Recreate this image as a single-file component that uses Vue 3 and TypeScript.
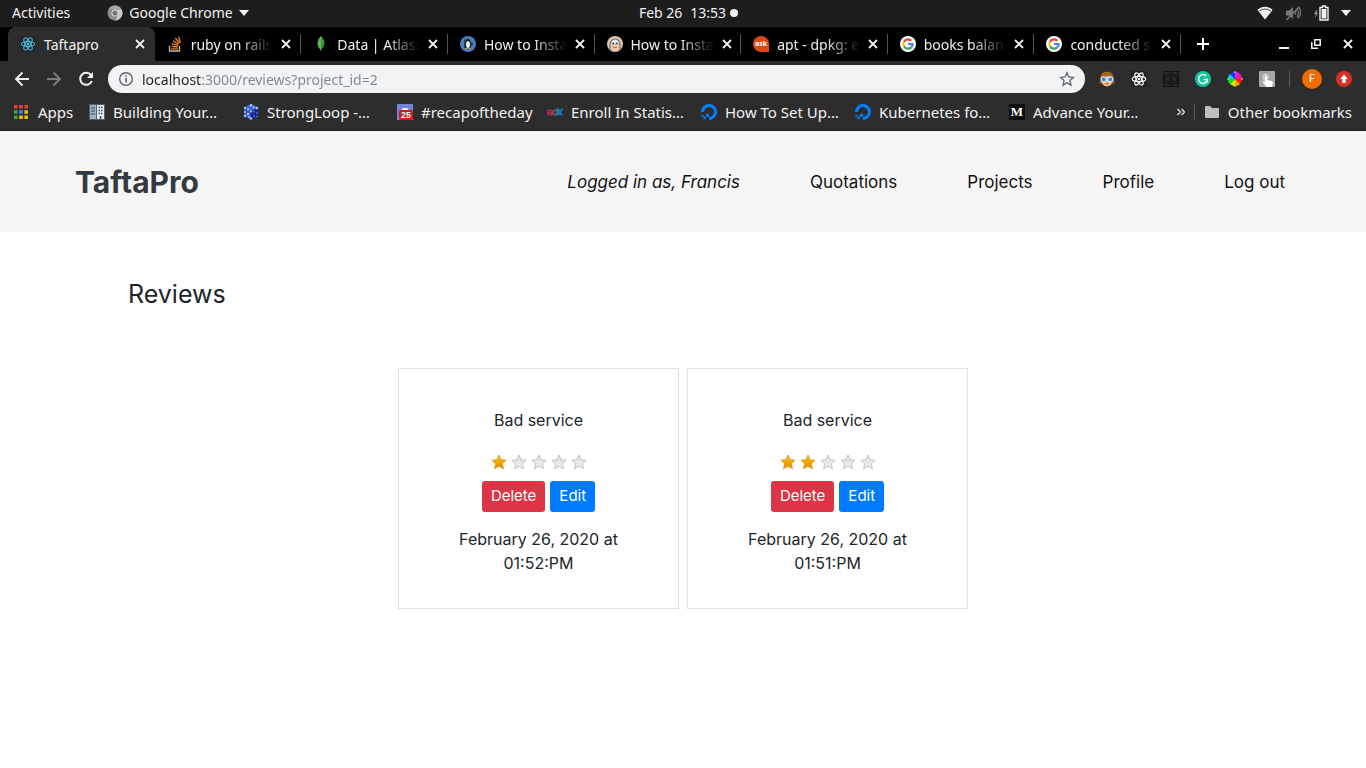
<script setup lang="ts">
import { ref } from 'vue'

interface Tab {
  title: string
  icon: string
}
interface Bookmark {
  title: string
  icon: string
  short?: boolean
}
interface Review {
  id: number
  body: string
  rating: number
  date: string
}

const address = ref('localhost:3000/reviews?project_id=2')

const tabs: Tab[] = [
  { title: 'Taftapro', icon: 'react' },
  { title: 'ruby on rails', icon: 'stack' },
  { title: 'Data | Atlas:', icon: 'leaf' },
  { title: 'How to Insta', icon: 'penguin' },
  { title: 'How to Insta', icon: 'face' },
  { title: 'apt - dpkg: e', icon: 'ask' },
  { title: 'books balan', icon: 'google' },
  { title: 'conducted s', icon: 'google' },
]

const extensions = ['girl', 'atom', 'owl', 'grammarly', 'wheel', 'touch']

const bookmarks: Bookmark[] = [
  { title: 'Building Your…', icon: 'building' },
  { title: 'StrongLoop -…', icon: 'cube' },
  { title: '#recapoftheday', icon: 'calendar', short: true },
  { title: 'Enroll In Statis…', icon: 'edx' },
  { title: 'How To Set Up…', icon: 'ocean' },
  { title: 'Kubernetes fo…', icon: 'ocean' },
  { title: 'Advance Your…', icon: 'medium' },
]

const links = ['Quotations', 'Projects', 'Profile', 'Log out']

const reviews: Review[] = [
  { id: 1, body: 'Bad service', rating: 1, date: 'February 26, 2020 at 01:52:PM' },
  { id: 2, body: 'Bad service', rating: 2, date: 'February 26, 2020 at 01:51:PM' },
]
</script>

<template>
  <div class="screen">
    <svg class="sprite" aria-hidden="true">
      <defs>
        <linearGradient id="gold" x1="0" y1="0" x2="0" y2="1">
          <stop offset="0" stop-color="#fdc513" />
          <stop offset="1" stop-color="#e68a00" />
        </linearGradient>
        <linearGradient id="silver" x1="0" y1="0" x2="0" y2="1">
          <stop offset="0" stop-color="#dcdcdc" />
          <stop offset="1" stop-color="#f1f1ee" />
        </linearGradient>
      </defs>
      <symbol id="react" viewBox="0 0 16 16">
        <rect width="16" height="16" rx="1" fill="#20262b" />
        <g fill="none" stroke="#53c1de" stroke-width="1">
          <ellipse cx="8" cy="8" rx="6.8" ry="2.6" />
          <ellipse cx="8" cy="8" rx="6.8" ry="2.6" transform="rotate(60 8 8)" />
          <ellipse cx="8" cy="8" rx="6.8" ry="2.6" transform="rotate(120 8 8)" />
        </g>
        <circle cx="8" cy="8" r="1.4" fill="#53c1de" />
      </symbol>
      <symbol id="stack" viewBox="0 0 16 16">
        <path d="M2.5 10v5h10v-5" fill="none" stroke="#bcbbbb" stroke-width="1.3" />
        <path d="M4.2 12.8h6.6M4.3 10.3l6.5.7M4.8 7.6l6.3 1.8M6 4.7l5.6 3.4M8.3 2l4.2 5M11.6.6l1.7 6" fill="none" stroke="#f48024" stroke-width="1.3" />
      </symbol>
      <symbol id="leaf" viewBox="0 0 16 16">
        <path d="M8 0C11.8 3.6 13.2 9 8.3 13.5L8 16l-.4-2.5C3 9.4 4.2 3.6 8 0Z" fill="#3f9c35" />
        <path d="M8 2v14l-.4-2.5C3 9.4 4.5 4 8 0Z" fill="#5ab552" />
      </symbol>
      <symbol id="penguin" viewBox="0 0 16 16">
        <circle cx="8" cy="8" r="8" fill="#4a7ebb" />
        <path d="M8 2.5 13.5 8 8 13.5 4 12V4Z" fill="#24405f" />
        <path d="M6 5c0-2.5 4-2.5 4 0l1 5c0 4-6 4-6 0Z" fill="#151a20" />
        <ellipse cx="8" cy="8.5" rx="2" ry="3.5" fill="#f4f1e6" />
        <path d="m7 5.3 1 1 1-1Z" fill="#f0a01f" />
        <path d="M5.5 12.5h2M8.5 12.5h2" stroke="#f0c040" />
      </symbol>
      <symbol id="face" viewBox="0 0 16 16">
        <circle cx="8" cy="8" r="8" fill="#e7c3a5" />
        <path d="M3 9a5 6 0 0 1 10 0v3a5 4 0 0 1-10 0Z" fill="#f3c6a5" stroke="#5f7893" stroke-width="1.2" />
        <path d="M4.5 6c2-3 5-3 7 0l-1 1h-5Z" fill="#e9edf1" />
        <circle cx="6.2" cy="7.5" r="1" fill="#36475a" />
        <circle cx="9.8" cy="7.5" r="1" fill="#36475a" />
        <path d="M6 11q2 1.5 4 0" stroke="#b56d52" fill="none" />
      </symbol>
      <symbol id="google" viewBox="0 0 16 16">
        <circle cx="8" cy="8" r="8" fill="#fff" />
        <g fill="none" stroke-width="2.2">
          <path d="M4 5.7A4.6 4.6 0 0 1 11.3 4.7" stroke="#ea4335" />
          <path d="M4 5.7a4.7 4.7 0 0 0 0 4.6" stroke="#fbbc05" />
          <path d="M4 10.3a4.6 4.6 0 0 0 7.2 1.1" stroke="#34a853" />
          <path d="M8 8h4.6a4.6 4.6 0 0 1-1.4 3.4" stroke="#4285f4" />
        </g>
      </symbol>
      <symbol id="girl" viewBox="0 0 16 16">
        <path d="M1.5 6C1.5-1 14.5-1 14.5 6l1 6.500h-15Z" fill="#a5641a" />
        <path d="M3 6.500c3 0 5-1 6-2 1 1 2 2 4 2v4c0 6.500-10 6.500-10 0Z" fill="#f1b98c" />
        <circle cx="4.7" cy="8.3" r="2.5" fill="#2f86d8" stroke="#cfe8ff" stroke-width="1.2" />
        <circle cx="11.3" cy="8.3" r="2.5" fill="#2f86d8" stroke="#cfe8ff" stroke-width="1.2" />
        <path d="M6.5 12.8h3" stroke="#c04e37" />
      </symbol>
      <symbol id="atom" viewBox="0 0 16 16">
        <rect width="16" height="16" rx="1" fill="#222" />
        <g fill="none" stroke="#f2f2f2" stroke-width="1.2">
          <ellipse cx="8" cy="8" rx="6.8" ry="2.6" />
          <ellipse cx="8" cy="8" rx="6.8" ry="2.6" transform="rotate(60 8 8)" />
          <ellipse cx="8" cy="8" rx="6.8" ry="2.6" transform="rotate(120 8 8)" />
        </g>
        <circle cx="8" cy="8" r="1.3" fill="#f2f2f2" />
      </symbol>
      <symbol id="owl" viewBox="0 0 16 16">
        <rect x=".5" y=".5" width="15" height="15" fill="#292929" stroke="#111" />
        <path d="M.5 4h15M.5 12.5h15M6 .5l2 4 2-4M6 15.5l2-4 2 4" fill="none" stroke="#151515" />
        <circle cx="4.7" cy="8" r="3" fill="none" stroke="#151515" stroke-width="1.2" />
        <circle cx="11.3" cy="8" r="3" fill="none" stroke="#151515" stroke-width="1.2" />
      </symbol>
      <symbol id="grammarly" viewBox="0 0 16 16">
        <circle cx="8" cy="8" r="8" fill="#15c39a" />
        <path d="M11 4.8A4.4 4.4 0 1 0 12.3 8.8" fill="none" stroke="#fff" stroke-width="1.5" />
        <path d="M8.8 8.6h3.5v3" fill="none" stroke="#fff" stroke-width="1.5" />
      </symbol>
      <symbol id="wheel" viewBox="0 0 16 16">
        <path d="M8 8V.8A7.2 7.2 0 0 1 13.1 2.9Z" fill="#e81cf0" />
        <path d="M8 8l5.1-5.1A7.2 7.2 0 0 1 15.2 8Z" fill="#ff1493" />
        <path d="M8 8h7.2a7.2 7.2 0 0 1-2.1 5.1Z" fill="#f01818" />
        <path d="M8 8l5.1 5.1A7.2 7.2 0 0 1 8 15.2Z" fill="#ffa000" />
        <path d="M8 8v7.2a7.2 7.2 0 0 1-5.1-2.1Z" fill="#c8f000" />
        <path d="M8 8l-5.1 5.1A7.2 7.2 0 0 1 .8 8Z" fill="#18e018" />
        <path d="M8 8H.8a7.2 7.2 0 0 1 2.1-5.1Z" fill="#00d8e8" />
        <path d="M8 8 2.9 2.9A7.2 7.2 0 0 1 8 .8Z" fill="#2038f0" />
        <path d="M8 0v2M8 14v2M0 8h2M14 8h2" stroke="#ddd" />
      </symbol>
      <symbol id="touch" viewBox="0 0 16 16">
        <rect width="16" height="16" rx="1" fill="#a8a8a8" />
        <circle cx="6.5" cy="6" r="4.5" fill="#c4c4c4" stroke="#8e8e8e" />
        <path d="M6 5.5c0-1.5 2-1.5 2 0V9l4.5 1c1 .3 1.5 1 1.3 2L13 16H7.5L4 11.5c-.5-1 .7-1.5 1.4-.8l.6.6Z" fill="#fff" />
      </symbol>
      <symbol id="building" viewBox="0 0 16 16">
        <rect width="16" height="16" fill="#52606d" />
        <rect x="1" y="1" width="6" height="14" fill="#9fb0be" />
        <rect x="8" y="1" width="7" height="14" fill="#e8edf1" />
        <path d="M2 4h4M2 7h4M2 10h4" stroke="#3a4653" stroke-width="1.2" />
        <path d="M9.5 3.5h1.5M12 3.5h1.5M9.5 6.5h1.5M12 6.5h1.5M9.5 9.5h1.5M12 9.5h1.5M11.5 12v3" stroke="#3a4653" stroke-width="1.5" />
      </symbol>
      <symbol id="cube" viewBox="0 0 16 16">
        <path d="M8 0l7 3.5v9L8 16l-7-3.5v-9Z" fill="#2a50b8" />
        <path d="M8 7l7-3.5v9L8 16Z" fill="#142c88" />
        <path d="M8 0l7 3.5L8 7 1 3.5Z" fill="#3f6bd0" />
        <g fill="#b4c8f8">
          <circle cx="2" cy="4" r="1.2" /><circle cx="8" cy="1.3" r="1.2" /><circle cx="14" cy="4" r="1.2" />
          <circle cx="5" cy="5.5" r="1.1" /><circle cx="2" cy="8" r="1.1" /><circle cx="5" cy="10" r="1.3" />
          <circle cx="8" cy="7.5" r="1.1" /><circle cx="2.2" cy="12" r="1.2" /><circle cx="8" cy="14.5" r="1.2" />
          <circle cx="6" cy="13" r="1" /><circle cx="11" cy="3.5" r="1" />
        </g>
        <g fill="#4668cc"><circle cx="11" cy="7.5" r="1" /><circle cx="14" cy="9" r="1" /><circle cx="11" cy="12" r="1" /><circle cx="14" cy="12.5" r="1" /></g>
      </symbol>
      <symbol id="edx" viewBox="0 0 16 16">
        <circle cx="3" cy="8.5" r="2.2" fill="none" stroke="#b72667" stroke-width="1.5" />
        <path d="M1 8.5h4.5" stroke="#b72667" stroke-width="1.2" />
        <circle cx="8" cy="8.5" r="2.2" fill="none" stroke="#6a6a6a" stroke-width="1.5" />
        <path d="M10.2 4v6.5" stroke="#6a6a6a" stroke-width="1.3" />
        <path d="m10.5 4.5 4.5 7M15.5 4.5l-5 7" stroke="#0a84cf" stroke-width="1.8" />
      </symbol>
      <symbol id="ocean" viewBox="0 0 16 16">
        <path d="M8 16v-3.2c3.3 0 5.9-3.2 4.6-6.7A4.9 4.9 0 0 0 9.8 3.4C6.4 2.2 3.2 4.7 3.2 8H0C0 2.8 5.2-1.5 10.7.4c2.3.8 4.1 2.6 4.9 4.9C17.3 10.8 13.2 16 8 16Z" fill="#0080ff" />
        <path d="M4.8 9.7H8v3.1H4.8ZM2.4 12.8h2.4v2.4H2.4ZM.4 10.8h2v2h-2Z" fill="#0080ff" />
      </symbol>
      <symbol id="star" viewBox="0 0 16 16">
        <path d="M8 1l2.1 4.7 5 .6-3.7 3.4 1 5L8 12.2l-4.4 2.5 1-5L.9 6.3l5-.6Z" />
      </symbol>
    </svg>

    <div class="system-bar">
      <div class="system-left">
        <button class="plain">Activities</button>
        <button class="plain app-menu">
          <svg class="i16" viewBox="0 0 16 16">
            <circle cx="8" cy="8" r="7.5" fill="#8a8a8a" />
            <path d="M1.5 4.3A7.5 7.5 0 0 1 14.5 4.3H8Z" fill="#a6a6a6" />
            <path d="M14.5 4.3A7.5 7.5 0 0 1 8 15.5l3.2-5.5L11 4.5Z" fill="#c9c9c9" />
            <circle cx="8" cy="8" r="3.5" fill="#e6e6e6" />
            <circle cx="8" cy="8" r="2.6" fill="#757575" />
          </svg>
          Google Chrome
          <svg class="caret" viewBox="0 0 10 6"><path d="M0 0h10L5 6Z" fill="#f2f2f2" /></svg>
        </button>
      </div>
      <div class="clock">
        <span>Feb 26</span><span>13:53</span><i class="dot"></i>
      </div>
      <div class="system-right">
        <svg class="i16" viewBox="0 0 16 16"><path d="M8 14.5.5 5C4.5.8 11.5.8 15.5 5Z" fill="#f2f2f2" /><path d="M2.2 6q5.8-3.8 11.6 0" fill="none" stroke="#1d1d1d" stroke-width=".8" /></svg>
        <svg class="i16" viewBox="0 0 16 16"><path d="M1 5.5h3L8 2v12l-4-3.5H1Z" fill="#777" /><path d="M10 6q1.5 2 0 4M12 4q3 4 0 8M14 2.5q3.5 5.5-1 11" fill="none" stroke="#777" stroke-width="1.2" /><path d="M1.5 15 14.5 1.5" stroke="#777" stroke-width="1.5" /></svg>
        <svg class="i16" viewBox="0 0 16 16"><path d="M4 4 1 9h2l-1 4 3-5H3.5Z" fill="#999" /><path d="M9.5 1h3v1.500H15V15H7V2.500h2.500Z" fill="none" stroke="#f2f2f2" stroke-width="1.4" /><rect x="8.6" y="4" width="4.8" height="9.5" fill="#f2f2f2" /></svg>
        <svg class="caret" viewBox="0 0 10 6"><path d="M0 0h10L5 6Z" fill="#f2f2f2" /></svg>
      </div>
    </div>

    <div class="tab-strip">
      <div class="tabs">
        <div v-for="(tab, i) in tabs" :key="i" class="tab" :class="{ active: i === 0 }">
          <span v-if="tab.icon === 'ask'" class="i16 ask">ask</span>
          <svg v-else class="i16"><use :href="'#' + tab.icon" /></svg>
          <span class="tab-title">{{ tab.title }}</span>
          <button class="plain close" aria-label="Close tab">
            <svg viewBox="0 0 10 10"><path d="m1 1 8 8M9 1 1 9" stroke="#f1f1f1" stroke-width="1.8" /></svg>
          </button>
        </div>
      </div>
      <button class="plain new-tab" aria-label="New tab">
        <svg viewBox="0 0 12 12"><path d="M6 0v12M0 6h12" stroke="#fff" stroke-width="2" /></svg>
      </button>
      <div class="window-controls">
        <button class="plain" aria-label="Minimize"><svg viewBox="0 0 10 10"><path d="M0 9h10" stroke="#f1f1f1" stroke-width="2" /></svg></button>
        <button class="plain" aria-label="Restore"><svg viewBox="0 0 10 10"><path d="M3.8.8h5.4v5.4H3.8ZM.8 3v6.2H7" fill="none" stroke="#f1f1f1" stroke-width="1.5" /></svg></button>
        <button class="plain" aria-label="Close"><svg viewBox="0 0 10 10"><path d="m1 1 8 8M9 1 1 9" stroke="#f1f1f1" stroke-width="1.8" /></svg></button>
      </div>
    </div>

    <div class="toolbar">
      <button class="plain" aria-label="Back"><svg class="i16" viewBox="0 0 16 16"><path d="M15 8H2.5M8.5 1.5 2 8l6.5 6.5" fill="none" stroke="#f1f1f1" stroke-width="1.9" /></svg></button>
      <button class="plain" aria-label="Forward"><svg class="i16" viewBox="0 0 16 16"><path d="M1 8h12.5M7.5 1.5 14 8l-6.5 6.5" fill="none" stroke="#7c7c7c" stroke-width="1.9" /></svg></button>
      <button class="plain" aria-label="Reload"><svg class="i16" viewBox="0 0 16 16"><path d="M13 4.2A6 6 0 1 0 13.8 10" fill="none" stroke="#f1f1f1" stroke-width="2" /><path d="M15 1v6H9Z" fill="#f1f1f1" /></svg></button>
      <div class="omnibox">
        <svg class="i16" viewBox="0 0 16 16"><circle cx="8" cy="8" r="6.3" fill="none" stroke="#5f6368" stroke-width="1.4" /><path d="M8 7v4.5M8 4.2v1.6" stroke="#5f6368" stroke-width="1.6" /></svg>
        <input v-model="address" class="address" aria-label="Address" spellcheck="false" />
        <button class="plain" aria-label="Bookmark this page"><svg class="i16" viewBox="0 0 16 16"><path d="M8 1.7l1.8 4.3 4.7.4-3.6 3.1 1.1 4.6L8 11.7l-4 2.4 1.1-4.6L1.5 6.4l4.7-.4Z" fill="none" stroke="#5f6368" stroke-width="1.3" /></svg></button>
      </div>
      <div class="extensions">
        <button v-for="name in extensions" :key="name" class="plain" :aria-label="name">
          <svg class="i16"><use :href="'#' + name" /></svg>
        </button>
      </div>
      <i class="divider"></i>
      <button class="avatar" aria-label="Profile">F</button>
      <button class="plain" aria-label="Update">
        <svg class="i16" viewBox="0 0 16 16"><circle cx="8" cy="8" r="8" fill="#d93025" /><path d="M8 3.5 12 8H9.7v4H6.3V8H4Z" fill="#fff" /></svg>
      </button>
    </div>

    <div class="bookmarks">
      <a href="#" class="bookmark apps">
        <svg viewBox="0 0 14 14">
          <path d="M0 0h3.5v3.5H0ZM5.2 0h3.5v3.5H5.2ZM10.4 0h3.5v3.5h-3.5Z" fill="#ea4335" />
          <path d="M0 5.2h3.5v3.5H0ZM0 10.4h3.5v3.5H0Z" fill="#34a853" />
          <path d="M5.2 5.2h3.5v3.5H5.2Z" fill="#4285f4" />
          <path d="M10.4 5.2h3.5v3.5h-3.5ZM5.2 10.4h3.5v3.5H5.2ZM10.4 10.4h3.5v3.5h-3.5Z" fill="#fbbc05" />
        </svg>
        Apps
      </a>
      <a v-for="mark in bookmarks" :key="mark.title" href="#" class="bookmark fixed" :class="{ short: mark.short }">
        <span v-if="mark.icon === 'medium'" class="i16 medium">M</span>
        <span v-else-if="mark.icon === 'calendar'" class="i16 calendar"><b>25</b></span>
        <svg v-else class="i16"><use :href="'#' + mark.icon" /></svg>
        {{ mark.title }}
      </a>
      <div class="bookmarks-end">
        <button class="plain" aria-label="More bookmarks"><svg class="chevrons" viewBox="0 0 8 8"><path d="m.5 1 3 3-3 3M4.5 1l3 3-3 3" fill="none" stroke="#e6e6e6" stroke-width="1.3" /></svg></button>
        <i class="divider"></i>
        <a href="#" class="bookmark">
          <svg class="i16" viewBox="0 0 16 16"><path d="M1 3q0-1 1-1h4l2 2h6q1 0 1 1v8q0 1-1 1H2q-1 0-1-1Z" fill="#bdbdbd" /></svg>
          Other bookmarks
        </a>
      </div>
    </div>

    <header class="site-header">
      <a href="#" class="brand">TaftaPro</a>
      <nav class="site-nav">
        <em>Logged in as, Francis</em>
        <a v-for="link in links" :key="link" href="#">{{ link }}</a>
      </nav>
    </header>

    <main class="content">
      <h1>Reviews</h1>
      <div class="cards">
        <article v-for="review in reviews" :key="review.id" class="card">
          <p>{{ review.body }}</p>
          <div class="stars" role="img" :aria-label="review.rating + ' of 5'">
            <svg v-for="n in 5" :key="n" class="i16 star" :class="{ on: n <= review.rating }"><use href="#star" /></svg>
          </div>
          <div class="actions">
            <button class="btn danger">Delete</button>
            <button class="btn primary">Edit</button>
          </div>
          <p class="date">{{ review.date }}</p>
        </article>
      </div>
    </main>
  </div>
</template>

<style>
body {
  margin: 0;
  background: #fff;
}
</style>

<style scoped>
.screen {
  min-height: 100vh;
  font-family: 'Noto Sans', 'Open Sans', sans-serif;
  font-size: 14px;
  color: #f2f2f2;
  background: #fff;
}
.sprite {
  position: absolute;
  width: 0;
  height: 0;
}
.plain {
  display: flex;
  align-items: center;
  padding: 0;
  border: 0;
  background: none;
  color: inherit;
  font: inherit;
}
svg {
  display: block;
  flex: none;
}
.i16 {
  flex: none;
  width: 16px;
  height: 16px;
}
a {
  color: inherit;
  text-decoration: none;
}

.system-bar {
  display: grid;
  grid-template-columns: 1fr auto 1fr;
  align-items: center;
  box-sizing: border-box;
  height: 27px;
  padding: 0 15px 2px 12px;
  background: #1d1d1d;
}
.system-left {
  display: flex;
  gap: 37px;
}
.app-menu {
  gap: 6px;
}
.caret {
  width: 10px;
  height: 6px;
}
.clock {
  display: flex;
  align-items: center;
  gap: 8px;
  padding-left: 14px;
}
.dot {
  width: 8px;
  height: 8px;
  margin-left: -4px;
  border-radius: 50%;
  background: #f2f2f2;
}
.system-right {
  display: flex;
  justify-content: flex-end;
  align-items: center;
  gap: 12px;
}

.tab-strip {
  display: flex;
  height: 34px;
  padding: 0 13px 0 8px;
  background: #000;
}
.tabs {
  display: flex;
  flex: 1;
  min-width: 0;
}
.tab {
  display: flex;
  flex: 1;
  align-items: center;
  gap: 8px;
  min-width: 0;
  padding: 0 10px 0 12px;
  background: linear-gradient(#555, #555) right center / 1px 20px no-repeat;
}
.tab.active {
  border-radius: 8px 8px 0 0;
  background: #2d2d2d;
}
.tab-title {
  flex: 1;
  white-space: nowrap;
  mask-image: linear-gradient(to right, #000 calc(100% - 34px), transparent);
}
.active .tab-title {
  mask-image: none;
}
.ask {
  border-radius: 8px 8px 1px 8px;
  background: #dd4814;
  color: #fff;
  font: 700 7px/15px 'Open Sans', sans-serif;
  text-align: center;
}
.close svg,
.window-controls svg {
  width: 10px;
  height: 10px;
}
.new-tab {
  margin: 0 70px 0 16px;
}
.new-tab svg {
  width: 12px;
  height: 12px;
}
.window-controls {
  display: flex;
  gap: 22px;
}

.toolbar {
  display: flex;
  align-items: center;
  gap: 16px;
  height: 36px;
  padding: 0 14px;
  background: #2d2d2d;
}
.omnibox {
  display: flex;
  flex: 1;
  align-items: center;
  gap: 8px;
  height: 28px;
  margin: 0 -2px;
  padding: 0 10px;
  border-radius: 14px;
  background: #f1f3f4;
}
.address {
  flex: 1;
  min-width: 0;
  padding: 0;
  border: 0;
  outline: 0;
  font: inherit;
  color: transparent;
  background: linear-gradient(to right, #202124 59px, #80868b 59px);
  background-clip: text;
}
.extensions {
  display: flex;
  gap: 16px;
}
.divider {
  width: 1px;
  height: 16px;
  background: #5a5a5a;
}
.toolbar .divider {
  margin: 0 -2px;
}
.avatar {
  width: 20px;
  height: 20px;
  margin: 0 -2px;
  padding: 0;
  border: 0;
  border-radius: 50%;
  background: #ef6c00;
  color: #fff;
  font: 11px/20px Roboto, sans-serif;
}

.bookmarks {
  display: flex;
  align-items: center;
  box-sizing: border-box;
  gap: 16px;
  height: 34px;
  padding: 0 14px 4px;
  border-bottom: 1px solid #1a1a1a;
  background: #2d2d2d;
  font-size: 15px;
  white-space: nowrap;
}
.bookmark {
  display: flex;
  align-items: center;
  gap: 8px;
}
.bookmark.apps {
  gap: 10px;
  width: 59px;
}
.apps svg {
  width: 14px;
  height: 14px;
}
.bookmark.fixed {
  width: 138px;
}
.bookmark.fixed.short {
  width: 134px;
}
.medium {
  background: #0e0e0e;
  color: #fff;
  font: 700 13px/16px 'Liberation Serif', serif;
  text-align: center;
}
.calendar {
  display: flex;
  align-items: flex-end;
  justify-content: flex-end;
  background: radial-gradient(ellipse at 50% 60%, #fff 40%, #7386d6 45%);
}
.calendar b {
  width: 14px;
  border-radius: 2px;
  background: #d9141e;
  color: #fff;
  font: 700 9px/10px 'Liberation Sans', sans-serif;
  text-align: center;
}
.bookmarks-end {
  display: flex;
  align-items: center;
  gap: 9px;
  margin-left: auto;
}
.chevrons {
  width: 8px;
  height: 8px;
}

.site-header {
  display: flex;
  justify-content: space-between;
  align-items: center;
  box-sizing: border-box;
  height: 101px;
  padding: 0 81px 0 75px;
  background: #f6f6f6;
  color: #111;
  font-family: Inter, sans-serif;
  font-size: 17px;
}
.brand {
  color: #343a40;
  font: 700 30px/40px Inter, sans-serif;
}
.site-nav {
  display: flex;
  gap: 70px;
}

.content {
  padding: 48px 128px;
  color: #212529;
  font-family: Inter, sans-serif;
  font-size: 16px;
  line-height: 24px;
}
h1 {
  margin: 0 0 60px;
  font-size: 25px;
  font-weight: 400;
  line-height: 28px;
}
.cards {
  display: flex;
  justify-content: center;
  gap: 8px;
}
.card {
  box-sizing: border-box;
  width: 281px;
  padding: 39px 48px 33px;
  border: 1px solid #dee2e6;
  text-align: center;
}
.card p {
  margin: 0;
}
.stars {
  display: flex;
  justify-content: center;
  gap: 4px;
  margin: 22px 0 11px;
}
.star {
  fill: url(#silver);
  stroke: #c3c3c3;
}
.star.on {
  fill: url(#gold);
  stroke: #e0a030;
}
.actions {
  display: flex;
  justify-content: center;
  gap: 5px;
  margin-bottom: 15px;
}
.btn {
  padding: 4px 9px 6px;
  border: 0;
  border-radius: 3px;
  color: #fff;
  font: 15px/21px Inter, sans-serif;
}
.danger {
  background: #dc3545;
}
.primary {
  background: #007bff;
}
</style>
